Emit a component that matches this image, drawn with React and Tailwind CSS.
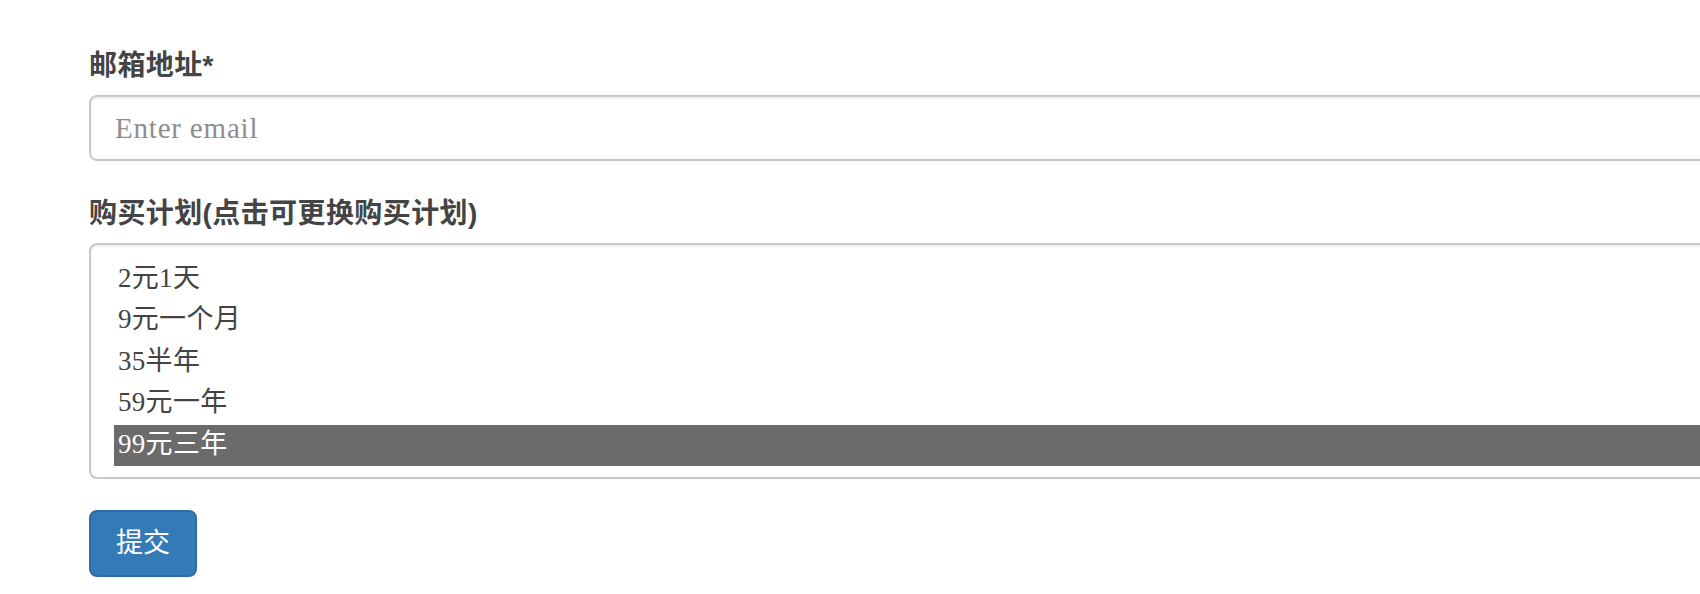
export default function App() {
  const options = ["2元1天", "9元一个月", "35半年", "59元一年", "99元三年"];
  return (
    <div className="w-full h-[594px] overflow-hidden bg-white">
      <form className="w-[1800px] pl-[89px] pt-[48px]">
        <label className="block text-[28px] tracking-[0.4px] leading-[36px] font-bold text-[#444] mb-[11px] font-['Liberation_Sans','Noto_Sans_CJK_SC',sans-serif]">
          邮箱地址*
        </label>
        <input
          type="email"
          placeholder="Enter email"
          className="block w-full h-[66px] border-2 border-[#c8c8c8] rounded-[8px] pl-[24px] text-[29px] tracking-[0.8px] text-[#555] placeholder:text-[#8e8e8e] shadow-[inset_0_2px_2px_rgba(0,0,0,0.075)] outline-none font-['Liberation_Serif','Noto_Sans_CJK_SC',serif]"
        />
        <label className="block mt-[35px] text-[28px] tracking-[0.4px] leading-[36px] font-bold text-[#444] mb-[11px] font-['Liberation_Sans','Noto_Sans_CJK_SC',sans-serif]">
          购买计划(点击可更换购买计划)
        </label>
        <div className="w-full h-[236px] border-2 border-[#c8c8c8] rounded-[8px] pt-[14px] pl-[23px] shadow-[inset_0_2px_2px_rgba(0,0,0,0.075)] font-['Liberation_Serif','Noto_Sans_CJK_SC',serif]">
          {options.map((o, i) => (
            <div
              key={o}
              className={
                "h-[41.4px] pl-[4px] text-[27px] tracking-[0.3px] leading-[39px] " +
                (i === 4 ? "bg-[#6b6b6b] text-white" : "text-[#444]")
              }
            >
              {o}
            </div>
          ))}
        </div>
        <button
          type="button"
          className="mt-[31px] h-[67px] px-[25px] bg-[#337ab7] border-2 border-[#2e6da4] rounded-[8px] text-white text-[27px] leading-none font-['Liberation_Sans','Noto_Sans_CJK_SC',sans-serif]"
        >
          提交
        </button>
      </form>
    </div>
  );
}
